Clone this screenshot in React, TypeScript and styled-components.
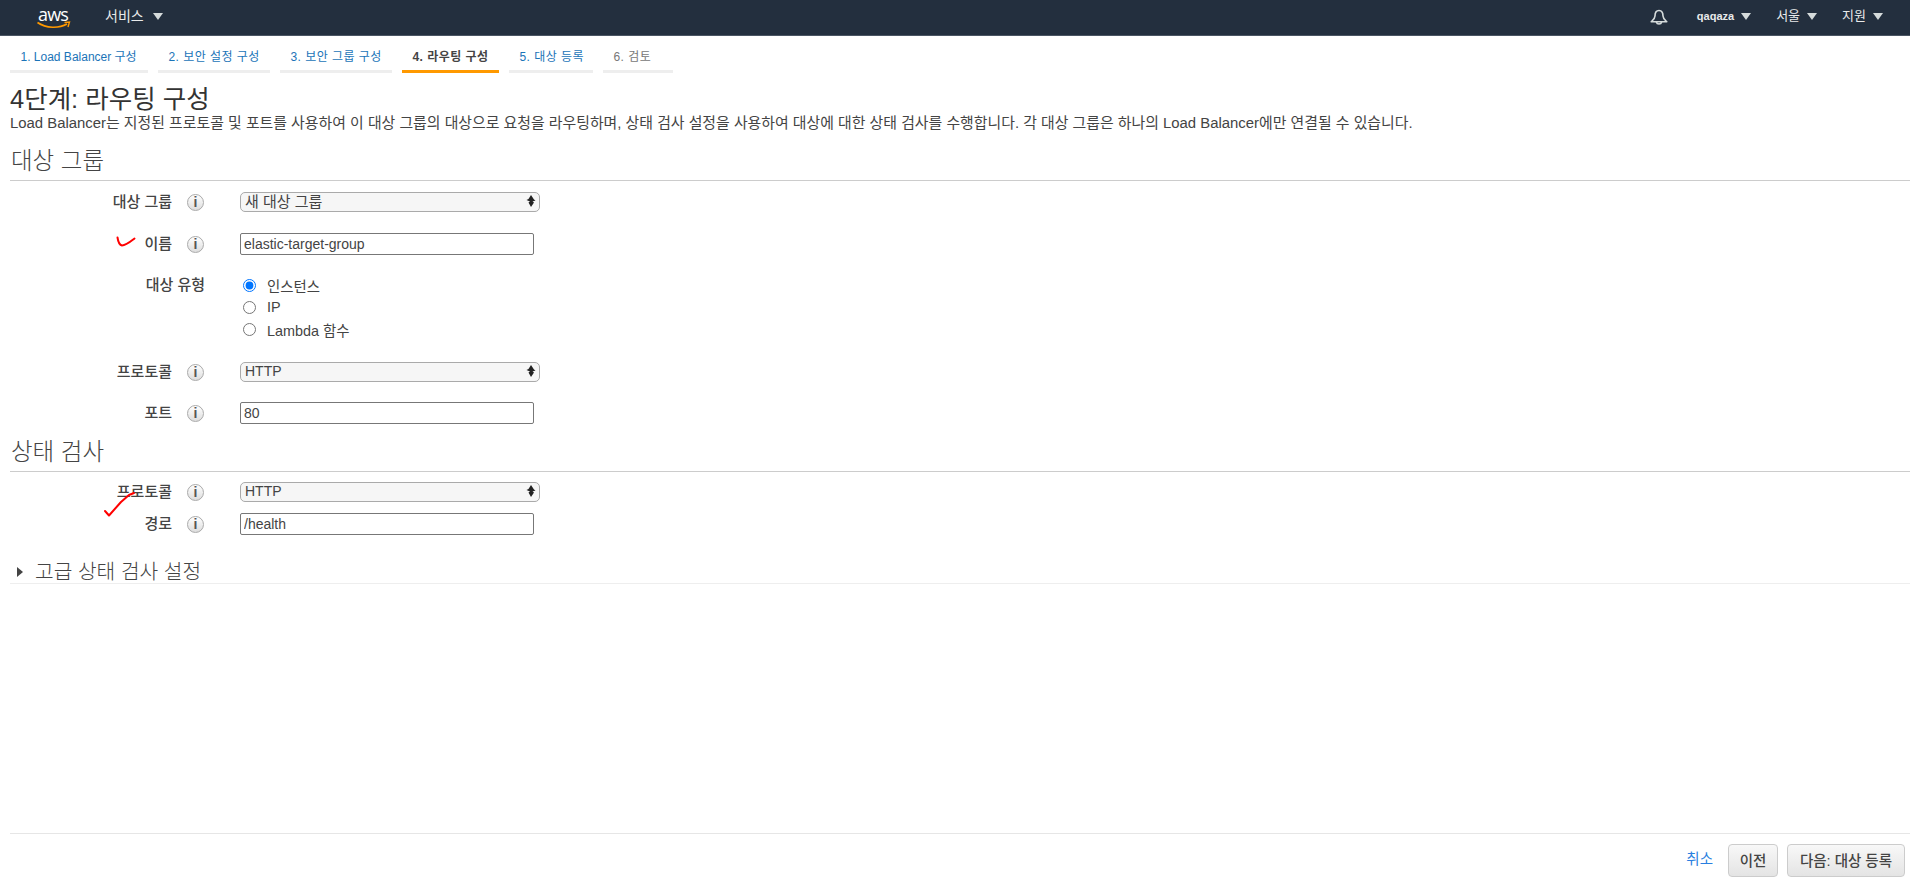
import React from "react";
import styled, { createGlobalStyle } from "styled-components";

const GlobalStyle = createGlobalStyle`
  html, body { margin: 0; padding: 0; background: #fff; }
  body { font-family: "Liberation Sans", "Noto Sans CJK KR", sans-serif; color: #444; }
  * { box-sizing: border-box; }
`;

const Page = styled.div`
  min-height: 100vh;
  height: 887px;
  display: flex;
  flex-direction: column;
  position: relative;
  overflow: hidden;
`;

const TopBar = styled.header`
  height: 36px;
  flex: none;
  background: #232f3e;
  border-bottom: 1px solid #4a5563;
  display: flex;
  align-items: center;
  padding: 0 27px 3px 37px;
`;

const Logo = styled.div`
  width: 34px;
  height: 26px;
  position: relative;
  margin-right: 34px;
  color: #fff;
  top: 1px;
`;

const LogoWord = styled.span`
  position: absolute;
  left: 1px;
  top: -1px;
  font: 400 18px/22px "Open Sans", "Liberation Sans", sans-serif;
  letter-spacing: -0.8px;
`;

const LogoSmile = styled.svg`
  position: absolute;
  left: 0;
  top: 17px;
`;

const NavButton = styled.div<{ $size?: number; $bold?: boolean; $gap?: number }>`
  display: flex;
  align-items: center;
  gap: ${(p) => p.$gap ?? 7}px;
  color: #e8eaea;
  font-size: ${(p) => p.$size ?? 13}px;
  font-weight: ${(p) => (p.$bold ? 700 : 400)};
  line-height: 18px;
`;

const Caret = styled.i<{ $w?: number }>`
  display: block;
  width: 0;
  height: 0;
  border-left: ${(p) => (p.$w ?? 10) / 2}px solid transparent;
  border-right: ${(p) => (p.$w ?? 10) / 2}px solid transparent;
  border-top: 7px solid #d5dbdb;
`;

const Spacer = styled.div`
  flex: 1;
`;

const BellIcon = styled.svg`
  display: block;
  margin: 4px 29px 0 0;
`;

const RightItem = styled.div`
  margin-right: 25px;
  &:last-child { margin-right: 0; }
`;

const Main = styled.main`
  flex: 1;
  padding-left: 10px;
`;

const Tabs = styled.nav`
  display: flex;
  gap: 10px;
  margin-top: 12px;
`;

const Tab = styled.div<{ $width: number; $spacing: number; $active?: boolean; $disabled?: boolean }>`
  width: ${(p) => p.$width}px;
  height: 25px;
  padding-left: 10.5px;
  border-bottom: 3px solid ${(p) => (p.$active ? "#ff9900" : "#eee")};
  color: ${(p) => (p.$active ? "#444" : p.$disabled ? "#777" : "#1b74b8")};
  font-size: 12px;
  font-weight: ${(p) => (p.$active ? 600 : 400)};
  letter-spacing: ${(p) => p.$spacing}px;
  line-height: 18px;
  white-space: nowrap;
`;

const Title = styled.h1`
  margin: 11px 0 0;
  font-size: 25.5px;
  font-weight: 400;
  line-height: 31px;
  color: #333;
`;

const Description = styled.p`
  margin: 0;
  font-size: 14.9px;
  line-height: 16px;
  color: #444;
  white-space: nowrap;
`;

const SectionTitle = styled.h2<{ $top: number }>`
  margin: ${(p) => p.$top}px 0 0;
  padding: 0 0 4px 1px;
  font-size: 23.5px;
  font-weight: 300;
  line-height: 30px;
  color: #444;
  border-bottom: 1px solid #ccc;
`;

const Row = styled.div<{ $top: number }>`
  display: flex;
  align-items: center;
  margin-top: ${(p) => p.$top}px;
`;

const TopRow = styled(Row)`
  align-items: flex-start;
`;

const FieldLabel = styled.label`
  width: 162px;
  flex: none;
  margin-top: -1px;
  text-align: right;
  font-size: 15px;
  font-weight: 500;
  line-height: 18px;
  color: #444;
  white-space: nowrap;
`;

const WideLabel = styled(FieldLabel)`
  width: 195px;
  margin: 2px 35px 0 0;
`;

const Info = styled.span`
  width: 17px;
  height: 17px;
  flex: none;
  margin: 0 36px 0 15px;
  border: 1px solid #aaa;
  border-radius: 50%;
  background: linear-gradient(#fff, #ddd);
  color: #555;
  text-align: center;
  font: 700 14px/15px "Liberation Sans", sans-serif;
`;

const SelectWrap = styled.div`
  position: relative;
  width: 300px;
  height: 20px;
`;

const Select = styled.select<{ $size: number }>`
  appearance: none;
  width: 100%;
  height: 100%;
  border: 1px solid #aaa;
  border-radius: 5px;
  background: #f6f6f6;
  padding: 0 4px 2px;
  font-family: inherit;
  font-size: ${(p) => p.$size}px;
  color: #444;
  outline: none;
`;

const SelectArrows = styled.svg`
  position: absolute;
  right: 4px;
  top: 2px;
  pointer-events: none;
`;

const TextInput = styled.input`
  width: 294px;
  height: 22px;
  border: 1px solid #777;
  border-radius: 2px;
  background: #fff;
  padding: 0 3px;
  font-family: inherit;
  font-size: 14px;
  color: #444;
  outline: none;
`;

const RadioGroup = styled.div`
  display: flex;
  flex-direction: column;
`;

const RadioLine = styled.label`
  display: flex;
  align-items: center;
  height: 22px;
  gap: 11px;
  padding-left: 3px;
  font-size: 14.4px;
  color: #444;
`;

const Radio = styled.input`
  width: 13px;
  height: 13px;
  margin: 0;
  accent-color: #0075ff;
`;

const Advanced = styled.div`
  margin-top: 25px;
  height: 24px;
  display: flex;
  align-items: center;
  gap: 12px;
  padding-left: 7px;
  border-bottom: 1px solid #eee;
  font-size: 20.3px;
  font-weight: 300;
  line-height: 22px;
  color: #444;
`;

const Expander = styled.i`
  display: block;
  width: 0;
  height: 0;
  border-top: 5px solid transparent;
  border-bottom: 5px solid transparent;
  border-left: 6px solid #444;
`;

const Footer = styled.footer`
  flex: none;
  height: 54px;
  margin-left: 10px;
  border-top: 1px solid #e6e6e6;
  padding: 10px 5px 0 0;
  display: flex;
  align-items: flex-start;
  justify-content: flex-end;
`;

const CancelLink = styled.a`
  color: #2a7fe0;
  font-size: 14.5px;
  line-height: 31px;
  margin-right: 15px;
`;

const Button = styled.button<{ $width: number }>`
  width: ${(p) => p.$width}px;
  height: 33px;
  margin-left: 9px;
  border: 1px solid #ccc;
  border-radius: 4px;
  background: linear-gradient(#f8f8f8, #e4e4e4);
  color: #444;
  font-family: inherit;
  font-size: 14.5px;
  font-weight: 500;
  padding: 0 0 3px;
  &:first-of-type { margin-left: 0; }
`;

const Annotation = styled.svg<{ $x: number; $y: number }>`
  position: absolute;
  left: ${(p) => p.$x}px;
  top: ${(p) => p.$y}px;
  pointer-events: none;
`;

const noop = () => {};

const SelectField = ({ value, size = 14 }: { value: string; size?: number }) => (
  <SelectWrap>
    <Select value={value} onChange={noop} $size={size}>
      <option>{value}</option>
    </Select>
    <SelectArrows width="10" height="14" viewBox="0 0 10 14">
      <path d="M5 1 L8 5.5 L9.5 6.5 L6.5 7.5 L8 8.5 L5 13 L2.5 8.5 L4 7.5 L0.5 6 L2.5 5 Z" fill="#222" />
    </SelectArrows>
  </SelectWrap>
);

const tabs = [
  { text: "1. Load Balancer 구성", width: 138, spacing: 0 },
  { text: "2. 보안 설정 구성", width: 112, spacing: 0.45 },
  { text: "3. 보안 그룹 구성", width: 112, spacing: 0.45 },
  { text: "4. 라우팅 구성", width: 97, spacing: 0.45 },
  { text: "5. 대상 등록", width: 84, spacing: 0.45 },
  { text: "6. 검토", width: 70, spacing: 0.45 },
];

export default function App() {
  return (
    <Page>
      <GlobalStyle />
      <TopBar>
        <Logo>
          <LogoWord>aws</LogoWord>
          <LogoSmile width="34" height="9" viewBox="0 0 34 9">
            <path d="M0.5 1.5 C9 7.5 22 7.5 30 3" fill="none" stroke="#f90" strokeWidth="1.6" />
            <path d="M27.5 1.5 L32.5 1 L31 6" fill="none" stroke="#f90" strokeWidth="1.4" />
          </LogoSmile>
        </Logo>
        <NavButton $size={14} $gap={9}>
          서비스 <Caret $w={11} />
        </NavButton>
        <Spacer />
        <BellIcon width="18" height="18" viewBox="0 0 18 18" fill="none" stroke="#d5dbdb" strokeWidth="1.6" strokeLinejoin="round">
          <path d="M9 1.5 C6 1.5 5 4 5 7 C5 9.5 3 11 1.2 12.8 H16.8 C15 11 13 9.5 13 7 C13 4 12 1.5 9 1.5 Z" />
          <path d="M6.3 13 A2.8 2.8 0 0 0 11.7 13" />
        </BellIcon>
        <RightItem>
          <NavButton $size={11} $bold>
            qaqaza <Caret />
          </NavButton>
        </RightItem>
        <RightItem>
          <NavButton>
            서울 <Caret />
          </NavButton>
        </RightItem>
        <RightItem>
          <NavButton>
            지원 <Caret />
          </NavButton>
        </RightItem>
      </TopBar>

      <Main>
        <Tabs>
          {tabs.map((t, i) => (
            <Tab key={t.text} $width={t.width} $spacing={t.spacing} $active={i === 3} $disabled={i === 5}>
              {t.text}
            </Tab>
          ))}
        </Tabs>
        <Title>4단계: 라우팅 구성</Title>
        <Description>
          Load Balancer는 지정된 프로토콜 및 포트를 사용하여 이 대상 그룹의 대상으로 요청을 라우팅하며, 상태 검사 설정을 사용하여 대상에 대한 상태 검사를 수행합니다. 각 대상 그룹은 하나의 Load Balancer에만 연결될 수 있습니다.
        </Description>

        <SectionTitle $top={15}>대상 그룹</SectionTitle>
        <Row $top={11}>
          <FieldLabel>대상 그룹</FieldLabel>
          <Info>i</Info>
          <SelectField value="새 대상 그룹" size={15} />
        </Row>
        <Row $top={21}>
          <FieldLabel>이름</FieldLabel>
          <Info>i</Info>
          <TextInput value="elastic-target-group" readOnly />
        </Row>
        <TopRow $top={19}>
          <WideLabel>대상 유형</WideLabel>
          <RadioGroup>
            <RadioLine>
              <Radio type="radio" name="tt" defaultChecked />
              인스턴스
            </RadioLine>
            <RadioLine>
              <Radio type="radio" name="tt" />
              IP
            </RadioLine>
            <RadioLine>
              <Radio type="radio" name="tt" />
              Lambda 함수
            </RadioLine>
          </RadioGroup>
        </TopRow>
        <Row $top={22}>
          <FieldLabel>프로토콜</FieldLabel>
          <Info>i</Info>
          <SelectField value="HTTP" />
        </Row>
        <Row $top={20}>
          <FieldLabel>포트</FieldLabel>
          <Info>i</Info>
          <TextInput value="80" readOnly />
        </Row>

        <SectionTitle $top={13}>상태 검사</SectionTitle>
        <Row $top={10}>
          <FieldLabel>프로토콜</FieldLabel>
          <Info>i</Info>
          <SelectField value="HTTP" />
        </Row>
        <Row $top={11}>
          <FieldLabel>경로</FieldLabel>
          <Info>i</Info>
          <TextInput value="/health" readOnly />
        </Row>

        <Advanced>
          <Expander />
          고급 상태 검사 설정
        </Advanced>
      </Main>

      <Footer>
        <CancelLink>취소</CancelLink>
        <Button $width={50}>이전</Button>
        <Button $width={118}>다음: 대상 등록</Button>
      </Footer>

      <Annotation $x={115} $y={235} width="22" height="13" viewBox="0 0 22 13">
        <path d="M2.5 2.5 C3 6 4 10 7 10.5 C11 10.5 15 7 19.5 3.5" fill="none" stroke="#f00" strokeWidth="2" strokeLinecap="round" />
      </Annotation>
      <Annotation $x={103} $y={491} width="32" height="26" viewBox="0 0 32 26">
        <path d="M2 20 L6 24.5 L18 11 L26 4 L31 2" fill="none" stroke="#f00" strokeWidth="2" strokeLinecap="round" strokeLinejoin="round" />
      </Annotation>
    </Page>
  );
}
